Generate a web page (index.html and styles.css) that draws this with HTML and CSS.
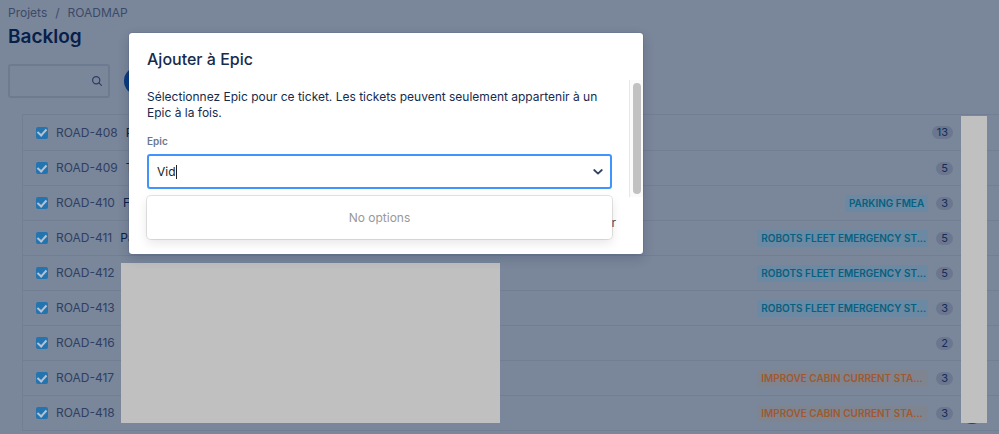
FILE: index.html
```html
<!DOCTYPE html>
<html lang="fr">
<head>
<meta charset="utf-8">
<title>Backlog</title>
<link rel="stylesheet" href="styles.css">
</head>
<body>
<main class="page">
  <nav class="crumbs"><a href="#">Projets</a><span>/</span><a href="#">ROADMAP</a></nav>
  <h1 class="title">Backlog</h1>
  <div class="toolbar">
    <div class="search">
      <input type="search" aria-label="Rechercher">
      <svg viewBox="0 0 12 12" width="12" height="12" fill="none" stroke="currentColor" stroke-width="1.2" stroke-linecap="round"><circle cx="5.2" cy="5.2" r="3.6"/><path d="M7.9 7.9 10.4 10.4"/></svg>
    </div>
    <span class="avatar"></span>
  </div>
  <ul class="issues">
    <li><input type="checkbox" aria-label="ROAD-408" checked><a href="#">ROAD-408</a><span class="summary">P</span><span class="points">13</span><span class="assignee"></span></li>
    <li><input type="checkbox" aria-label="ROAD-409" checked><a href="#">ROAD-409</a><span class="summary">T</span><span class="points">5</span><span class="assignee"></span></li>
    <li><input type="checkbox" aria-label="ROAD-410" checked><a href="#">ROAD-410</a><span class="summary">F</span><span class="epic teal">PARKING FMEA</span><span class="points">3</span><span class="assignee"></span></li>
    <li><input type="checkbox" aria-label="ROAD-411" checked><a href="#">ROAD-411</a><span class="summary">Pa</span><span class="epic teal wide">ROBOTS FLEET EMERGENCY ST...</span><span class="points">5</span><span class="assignee"></span></li>
    <li><input type="checkbox" aria-label="ROAD-412" checked><a href="#">ROAD-412</a><span class="summary"></span><span class="epic teal wide">ROBOTS FLEET EMERGENCY ST...</span><span class="points">5</span><span class="assignee"></span></li>
    <li><input type="checkbox" aria-label="ROAD-413" checked><a href="#">ROAD-413</a><span class="summary"></span><span class="epic teal wide">ROBOTS FLEET EMERGENCY ST...</span><span class="points">3</span><span class="assignee"></span></li>
    <li><input type="checkbox" aria-label="ROAD-416" checked><a href="#">ROAD-416</a><span class="summary"></span><span class="points">2</span><span class="assignee"></span></li>
    <li><input type="checkbox" aria-label="ROAD-417" checked><a href="#">ROAD-417</a><span class="summary"></span><span class="epic orange wide">IMPROVE CABIN CURRENT STA...</span><span class="points">3</span><span class="assignee"></span></li>
    <li><input type="checkbox" aria-label="ROAD-418" checked><a href="#">ROAD-418</a><span class="summary"></span><span class="epic orange wide">IMPROVE CABIN CURRENT STA...</span><span class="points">3</span><span class="assignee"></span></li>
  </ul>
</main>
<div class="cover cover-summary"></div>
<div class="cover cover-people"></div>
<section class="modal" role="dialog" aria-labelledby="dialog-title">
  <h2 id="dialog-title">Ajouter à Epic</h2>
  <div class="scroll">
    <div class="content">
      <p>Sélectionnez Epic pour ce ticket. Les tickets peuvent seulement appartenir à un Epic à la fois.</p>
      <label for="epic">Epic</label>
      <div class="combo">
        <div class="field">
          <input id="epic" type="text" value="Vid" autocomplete="off">
          <span class="caret"></span>
          <svg viewBox="0 0 12 12" width="12" height="12" fill="none" stroke="currentColor" stroke-width="1.8" stroke-linecap="round" stroke-linejoin="round"><path d="M2.2 4 6 7.6 9.8 4"/></svg>
        </div>
        <div class="menu">No options</div>
      </div>
    </div>
    <div class="track"><div class="thumb"></div></div>
  </div>
  <footer><button type="button">Annuler</button></footer>
</section>
</body>
</html>
```
FILE: styles.css
```css
* { box-sizing: border-box; }
body {
  margin: 0;
  min-height: 100vh;
  overflow: hidden;
  background: #7a869a;
  color: #172b4d;
  font: 12px/16px Inter, sans-serif;
}
a { color: inherit; text-decoration: none; }
.page { padding: 5px 0 0 8px; }
.crumbs { display: flex; gap: 8px; color: #3a4a69; }
.title { margin: 4px 0 0; font-size: 19px; line-height: 24px; font-weight: 600; color: #07204a; }
.toolbar { display: flex; align-items: center; gap: 14px; margin-top: 15px; }
.search {
  display: flex;
  align-items: center;
  width: 102px;
  height: 34px;
  padding: 0 5px;
  border: 2px solid #6d7b90;
  border-radius: 3px;
  color: #2c3d61;
}
.search input { flex: 1; min-width: 0; border: 0; background: none; outline: 0; }
.search svg { flex: none; }
.avatar { width: 28px; height: 28px; border-radius: 50%; background: #0b3a7e; }
.issues {
  margin: 16px 0 0 14px;
  padding: 0;
  list-style: none;
  border: 1px solid #717e93;
  border-right: 0;
}
.issues li { display: flex; align-items: center; height: 35px; padding: 0 16px 0 13px; color: #2f3f62; }
.issues li + li { border-top: 1px solid #717e93; }
.issues a { margin-left: 8px; }
.issues input {
  appearance: none;
  width: 12px;
  height: 12px;
  margin: 0;
  border-radius: 2px;
  background: #2474b0;
  display: grid;
  place-items: center;
}
.issues input::after {
  content: "";
  width: 4px;
  height: 7px;
  margin-top: -2px;
  border: solid #b4c2d2;
  border-width: 0 2px 2px 0;
  transform: rotate(42deg);
}
.summary { flex: 1; margin-left: 8px; color: #07204a; }
.epic { height: 17px; padding: 0 4px; border-radius: 2px; font-size: 10px; line-height: 17px; font-weight: 600; white-space: nowrap; }
.wide { width: 171px; }
.teal { background: #6b89a2; color: #07607f; }
.orange { background: #7e8591; color: #a0582f; }
.points { min-width: 16px; margin-left: 8px; padding: 0 5px; border-radius: 8px; background: #6a778e; color: #172b5a; font-size: 11px; line-height: 13px; }
.assignee { width: 22px; height: 22px; margin-left: 8px; border-radius: 50%; background: #2c3d61; }
.cover { position: absolute; background: #c0c0c0; }
.cover-summary { left: 121px; top: 263px; width: 379px; height: 160px; }
.cover-people { right: 12px; top: 116px; width: 26px; height: 307px; }
.modal {
  position: absolute;
  left: 129px;
  top: 33px;
  width: 514px;
  padding: 16px 0 22px 18px;
  border-radius: 3px;
  background: #fff;
  box-shadow: 0 0 1px rgba(9, 30, 66, .6), 0 4px 12px rgba(9, 30, 66, .2);
}
.modal h2 { margin: 0; font-size: 16px; line-height: 20px; font-weight: 500; }
.scroll { display: flex; gap: 17px; margin-top: 11px; height: 117px; }
.content { flex: 1; padding-top: 9px; }
.content p { margin: 0; }
.content label { display: block; margin-top: 12px; font-size: 10px; font-weight: 600; color: #6b778c; }
.combo { position: relative; margin-top: 5px; }
.field { display: flex; align-items: center; height: 35px; padding: 0 6px 0 8px; border: 2px solid #4094fb; border-radius: 3px; color: #344563; }
.field input { width: 19px; padding: 0; border: 0; outline: 0; background: none; color: #222; font: inherit; }
.caret { width: 1px; height: 14px; background: #222; }
.field svg { margin-left: auto; }
.menu {
  position: absolute;
  z-index: 1;
  top: 42px;
  left: 0;
  right: 0;
  padding: 14px 13px 13px;
  border-radius: 4px;
  background: #fff;
  box-shadow: 0 0 0 1px rgba(0, 0, 0, .1), 0 4px 11px rgba(0, 0, 0, .1);
  text-align: center;
  color: #999;
}
.track { width: 14px; padding: 3px 2px 3px 3px; border-left: 1px solid #e8e8e8; background: #fafafa; }
.thumb { width: 8px; height: 100%; border-radius: 4px; background: #c1c1c1; }
.modal footer { display: flex; justify-content: flex-end; padding: 17px 27px 0 0; }
.modal button { padding: 0; border: 0; background: none; color: #42526e; font: inherit; line-height: 18px; }
```
